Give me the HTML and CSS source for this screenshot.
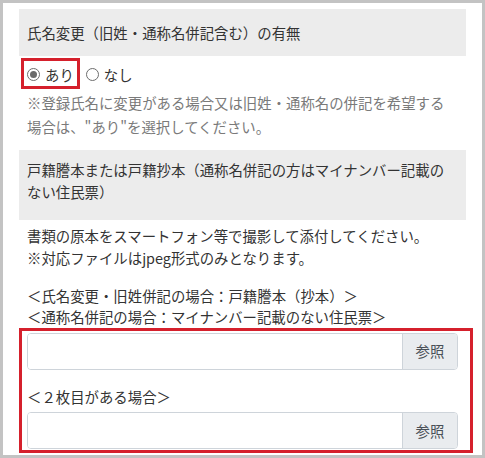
FILE: index.html
```html
<!DOCTYPE html>
<html lang="ja">
<head>
<meta charset="utf-8">
<title>氏名変更</title>
<link rel="stylesheet" href="styles.css">
</head>
<body>
<div class="frame">
  <section class="field">
    <div class="field-head field-head--single">氏名変更（旧姓・通称名併記含む）の有無</div>
    <div class="field-body field-body--radio">
      <div class="radios">
        <label class="radio"><span class="dot dot--checked"></span>あり</label>
        <label class="radio"><span class="dot"></span>なし</label>
      </div>
      <p class="note">※登録氏名に変更がある場合又は旧姓・通称名の併記を希望する<br>場合は、"あり"を選択してください。</p>
    </div>
  </section>
  <section class="field">
    <div class="field-head field-head--double">戸籍謄本または戸籍抄本（通称名併記の方はマイナンバー記載の<br>ない住民票）</div>
    <div class="field-body field-body--file">
      <p class="text">書類の原本をスマートフォン等で撮影して添付してください。<br>※対応ファイルはjpeg形式のみとなります。</p>
      <p class="text text--spaced">＜氏名変更・旧姓併記の場合：戸籍謄本（抄本）＞<br>＜通称名併記の場合：マイナンバー記載のない住民票＞</p>
      <div class="file-input">
        <span class="file-name"></span>
        <span class="file-btn">参照</span>
      </div>
      <p class="text text--label">＜２枚目がある場合＞</p>
      <div class="file-input">
        <span class="file-name"></span>
        <span class="file-btn">参照</span>
      </div>
    </div>
  </section>
  <div class="mark mark--radio"></div>
  <div class="mark mark--files"></div>
</div>
</body>
</html>
```
FILE: styles.css
```css
* { box-sizing: border-box; }
html, body { margin: 0; padding: 0; background: #fff; }
body {
  font-family: "Noto Sans CJK JP", "Noto Sans", sans-serif;
  font-size: 14.4px;
  line-height: 21.6px;
  color: #333;
}
.frame {
  position: relative;
  width: 485px;
  height: 458px;
  border: 3px solid #c3c3c3;
  padding: 6px 16px 0;
  overflow: hidden;
}
.field-head {
  background: #ececec;
  padding: 0 8px;
  color: #333;
}
.field-head--single { padding-top: 13px; padding-bottom: 12px; }
.field-head--double { padding-top: 9px; padding-bottom: 18px; }
.field-body { padding: 0 8px; }
.field-body--radio { padding-top: 8px; padding-bottom: 11px; }
.field-body--file { padding-top: 5px; }
.radios { display: flex; align-items: center; gap: 12px; }
.radio { display: flex; align-items: center; gap: 5px; }
.dot {
  width: 13px;
  height: 13px;
  border: 1px solid #6d6d6d;
  border-radius: 50%;
  display: flex;
  align-items: center;
  justify-content: center;
  background: #fff;
}
.dot--checked::after {
  content: "";
  width: 7px;
  height: 7px;
  border-radius: 50%;
  background: #6a6a6a;
}
.note {
  margin: 6px 0 0;
  color: #7a7a7a;
  line-height: 24px;
}
.text { margin: 0; }
.text--spaced { margin-top: 16px; }
.text--label { margin-top: 16px; }
.file-input {
  display: flex;
  height: 37px;
  border: 1px solid #ced4da;
  border-radius: 4px;
  margin-top: 5px;
  overflow: hidden;
}
.file-name { flex: 1; background: #fff; }
.file-btn {
  width: 55px;
  display: flex;
  align-items: center;
  justify-content: center;
  background: #e9ecef;
  border-left: 1px solid #ced4da;
  color: #495057;
}
.mark {
  position: absolute;
  border: 3px solid #d5202c;
}
.mark--radio { left: 18px; top: 55px; width: 59px; height: 31px; }
.mark--files { left: 16px; top: 325px; width: 454px; height: 125px; }
```
